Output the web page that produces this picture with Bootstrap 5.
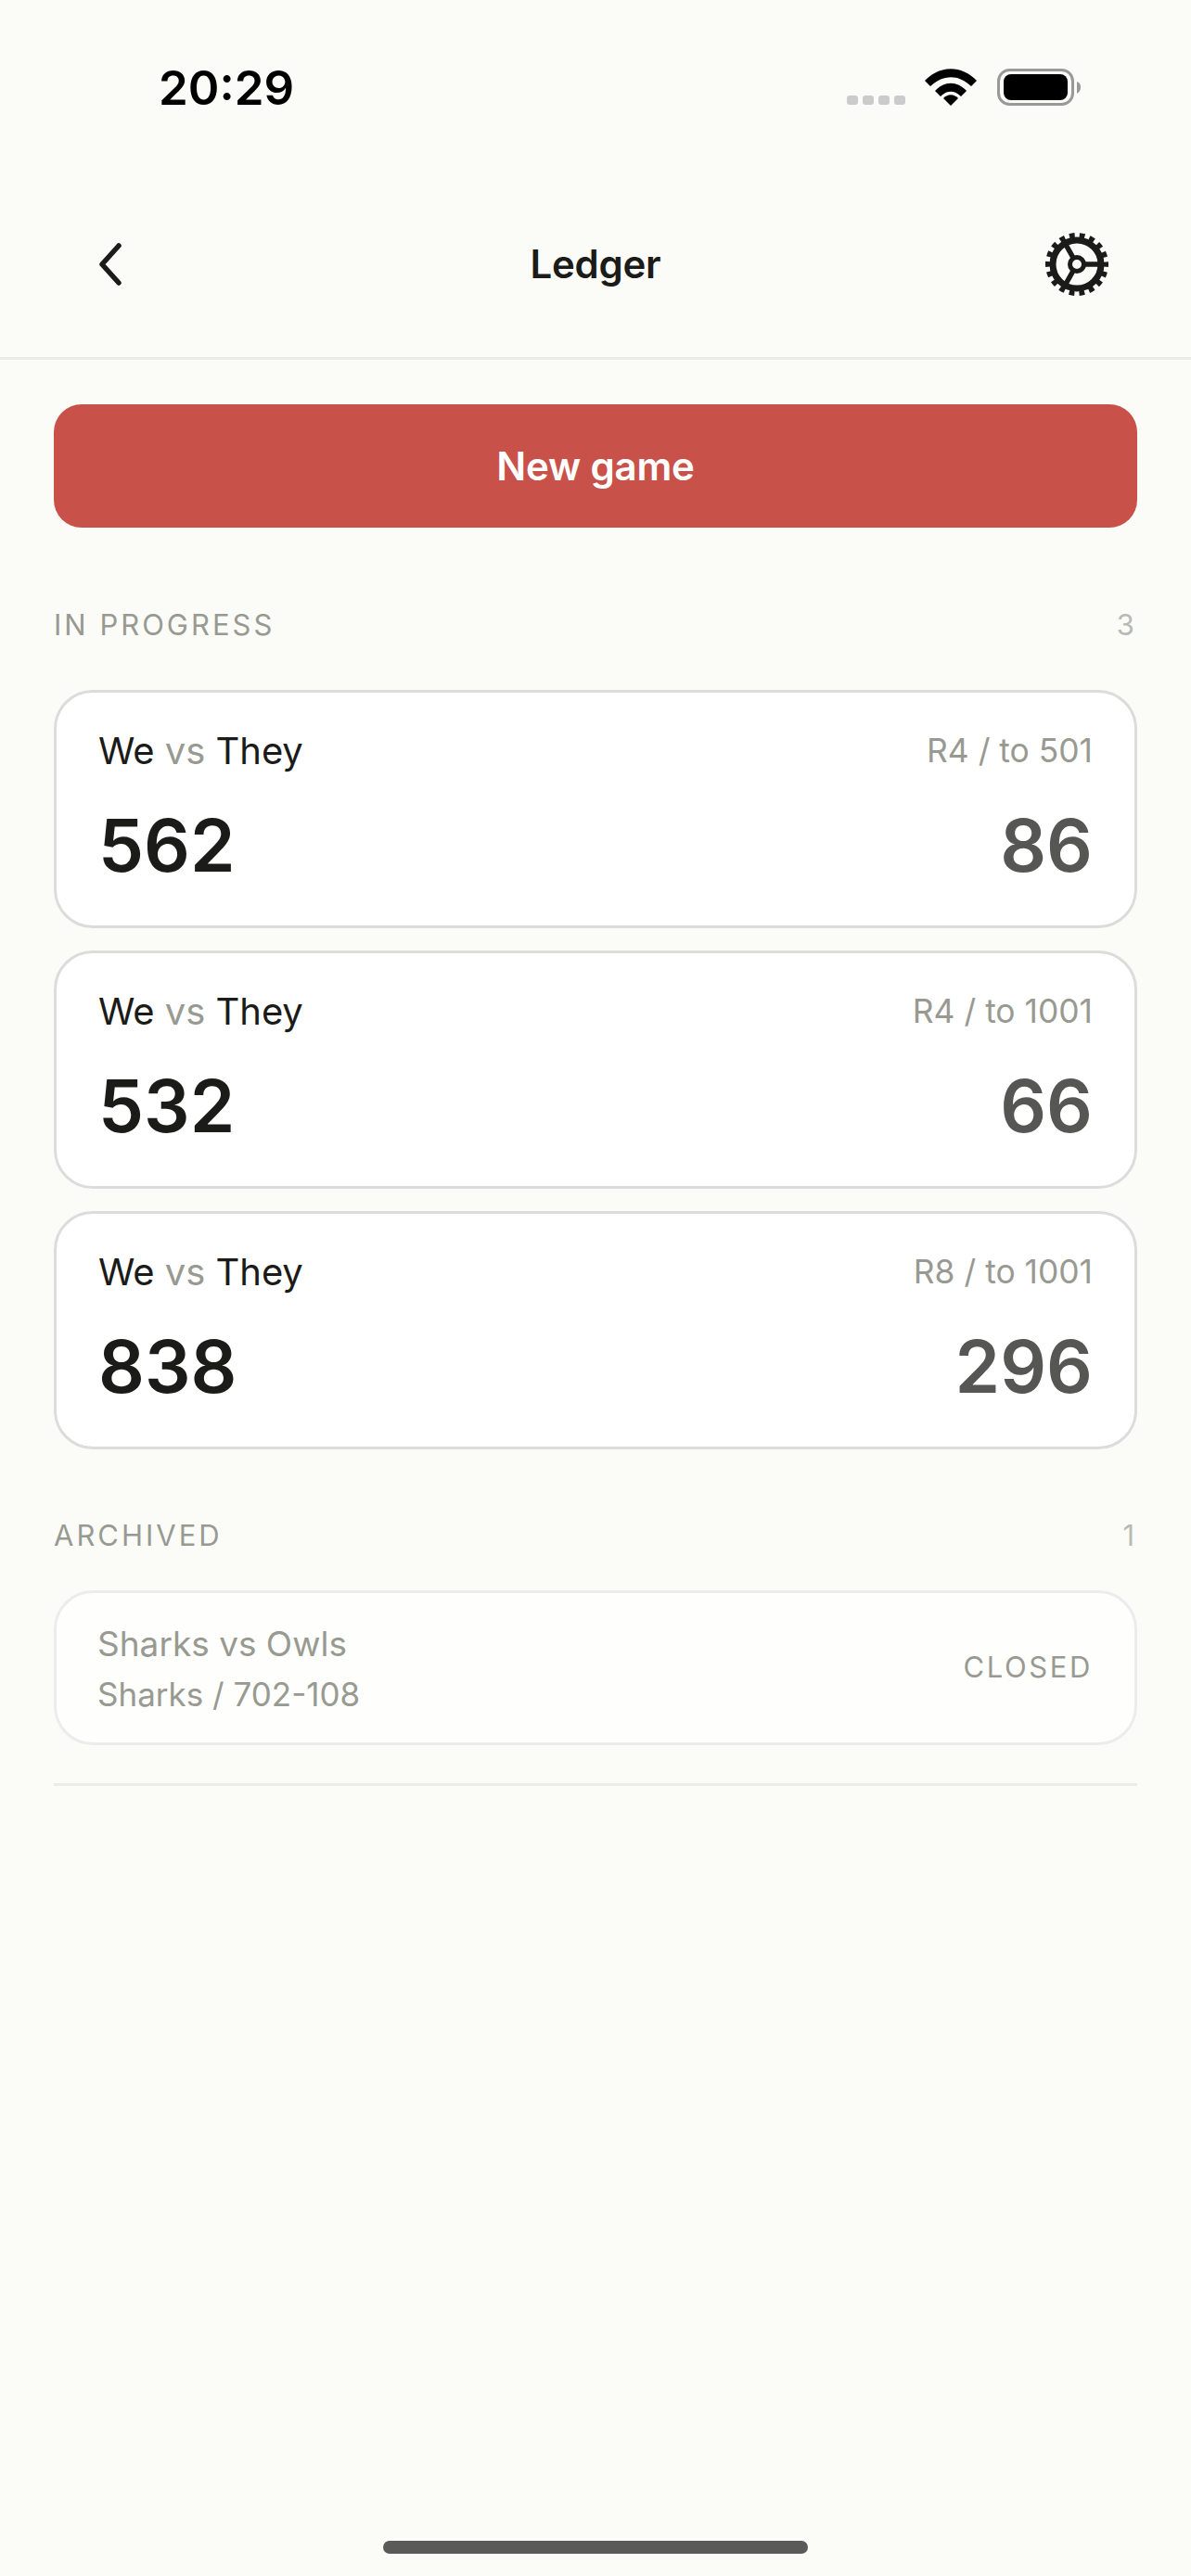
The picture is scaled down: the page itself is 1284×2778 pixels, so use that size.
<!DOCTYPE html>
<html lang="en">
<head>
  <meta charset="UTF-8">
  <title>Ledger</title>
  <meta name="viewport" content="width=device-width, initial-scale=1">
  <link href="https://cdn.jsdelivr.net/npm/bootstrap@5.3.0/dist/css/bootstrap.min.css" rel="stylesheet">
  <style>
    body { background: #fbfcf8; color: #1b1b19; font-family: Inter, "Liberation Sans", sans-serif; }
    .phone-page { min-height: 2778px; }
    .status-row { height: 188px; padding: 0 119px 0 171px; }
    .status-time { font-size: 51px; font-weight: 600; color: #000; line-height: 1; }
    .signal-dots { gap: 5px; margin-top: 28px; margin-right: 21px; }
    .signal-dots span { width: 12px; height: 10px; border-radius: 3px; background: #cbcbcb; }
    .wifi-icon { margin-right: 22px; }
    .nav-row { height: 200px; padding: 0 88px 4px; border-bottom: 3px solid #ebece8; }
    .nav-side { flex: 1 1 0; }
    .nav-back { margin-left: 13px; }
    .nav-title { font-size: 42px; font-weight: 600; letter-spacing: -.3px; }
    .content-area { padding: 48px 58px 0; }
    .new-game { height: 133px; border: 0; border-radius: 30px; background: #c8524a; color: #fff; font-size: 42px; font-weight: 600; letter-spacing: -.2px; }
    .new-game:hover { background: #c8524a; color: #fff; }
    .group-head { height: 36px; font-size: 31px; line-height: 37px; letter-spacing: 3px; color: #989a92; }
    .group-count { color: #b9bab3; letter-spacing: 0; padding-right: 3px; }
    .head-live { margin-top: 86px; margin-bottom: 53px; }
    .head-old { margin-top: 74px; margin-bottom: 42px; }
    .game-card { height: 257px; padding: 38px 45px 0 45px; border: 3px solid #dcdddb; border-radius: 42px; background: #fff; }
    .game-card + .game-card { margin-top: 24px; }
    .game-title { font-size: 40px; line-height: 50px; letter-spacing: -.05px; }
    .game-title em { font-style: normal; color: #989a92; }
    .game-meta { font-size: 35.4px; line-height: 50px; color: #989a92; }
    .game-scores { font-size: 78px; font-weight: 600; line-height: 90px; margin-top: 32px; }
    .score-they { color: #565654; }
    .old-card { height: 167px; padding: 0 45px 0 44px; border: 3px solid #ecedea; border-radius: 42px; background: #fefefc; color: #989a92; }
    .old-title { font-size: 37px; line-height: 50px; }
    .old-sub { font-size: 35px; line-height: 46px; margin-top: 6px; }
    .old-state { font-size: 31px; letter-spacing: 2.6px; }
    .list-end { margin-top: 41px; height: 3px; background: #ebece8; }
    .home-bar { width: 458px; height: 14px; border-radius: 7px; background: #5a5a58; margin: auto auto 24px; }
  </style>
</head>
<body>
  <div class="phone-page d-flex flex-column">
    <div class="status-row d-flex align-items-center justify-content-between">
      <div class="status-time">20:29</div>
      <div class="d-flex align-items-center">
        <div class="signal-dots d-flex"><span></span><span></span><span></span><span></span></div>
        <svg width="56" height="40" viewBox="0 0 56 40" class="wifi-icon">
          <path d="M0 13 C16 -4 40 -4 56 13 L50 19 C36 6 20 6 6 19Z" fill="#000"/>
          <path d="M11 24 C21 13 35 13 45 24 L39 30 C32 23 24 23 17 30Z" fill="#000"/>
          <path d="M20 32 C25 27 31 27 36 32 L28 40Z" fill="#000"/>
        </svg>
        <svg width="90" height="40" viewBox="0 0 90 40">
          <rect x="1.5" y="1.5" width="80" height="37" rx="12" fill="none" stroke="#999" stroke-width="3"/>
          <rect x="7" y="6" width="69" height="28" rx="8" fill="#000"/>
          <path d="M86 14 C89 15 90 17 90 20 C90 23 89 25 86 27Z" fill="#999"/>
        </svg>
      </div>
    </div>

    <div class="nav-row d-flex align-items-center">
      <div class="nav-side d-flex">
        <svg width="38" height="46" viewBox="0 0 38 46" class="nav-back"><path d="M27 3 L9 23 L27 43" fill="none" stroke="#1b1b19" stroke-width="5.5" stroke-linecap="round" stroke-linejoin="round"/></svg>
      </div>
      <div class="nav-title">Ledger</div>
      <div class="nav-side d-flex justify-content-end">
        <svg width="70" height="70" viewBox="0 0 70 70">
          <circle cx="35" cy="35" r="30" fill="none" stroke="#1b1b19" stroke-width="8" stroke-dasharray="5.5 4.97" stroke-dashoffset="2.75"/>
          <circle cx="35" cy="35" r="26" fill="none" stroke="#1b1b19" stroke-width="7"/>
          <path d="M43 35 H61 M31 28 L22 12 M31 42 L22 58" stroke="#1b1b19" stroke-width="5.5"/>
          <circle cx="35" cy="35" r="7.5" fill="none" stroke="#1b1b19" stroke-width="5"/>
        </svg>
      </div>
    </div>

    <div class="content-area">
      <button type="button" class="btn new-game w-100">New game</button>

      <div class="group-head head-live d-flex justify-content-between"><span>IN PROGRESS</span><span class="group-count">3</span></div>

      <div class="game-card">
        <div class="d-flex justify-content-between">
          <div class="game-title">We <em>vs</em> They</div>
          <div class="game-meta">R4 / to 501</div>
        </div>
        <div class="game-scores d-flex justify-content-between"><span>562</span><span class="score-they">86</span></div>
      </div>
      <div class="game-card">
        <div class="d-flex justify-content-between">
          <div class="game-title">We <em>vs</em> They</div>
          <div class="game-meta">R4 / to 1001</div>
        </div>
        <div class="game-scores d-flex justify-content-between"><span>532</span><span class="score-they">66</span></div>
      </div>
      <div class="game-card">
        <div class="d-flex justify-content-between">
          <div class="game-title">We <em>vs</em> They</div>
          <div class="game-meta">R8 / to 1001</div>
        </div>
        <div class="game-scores d-flex justify-content-between"><span>838</span><span class="score-they">296</span></div>
      </div>

      <div class="group-head head-old d-flex justify-content-between"><span>ARCHIVED</span><span class="group-count">1</span></div>

      <div class="old-card d-flex align-items-center justify-content-between">
        <div>
          <div class="old-title">Sharks vs Owls</div>
          <div class="old-sub">Sharks / 702-108</div>
        </div>
        <div class="old-state">CLOSED</div>
      </div>
      <div class="list-end"></div>
    </div>

    <div class="home-bar"></div>
  </div>
  <script src="https://cdn.jsdelivr.net/npm/bootstrap@5.3.0/dist/js/bootstrap.bundle.min.js"></script>
</body>
</html>
